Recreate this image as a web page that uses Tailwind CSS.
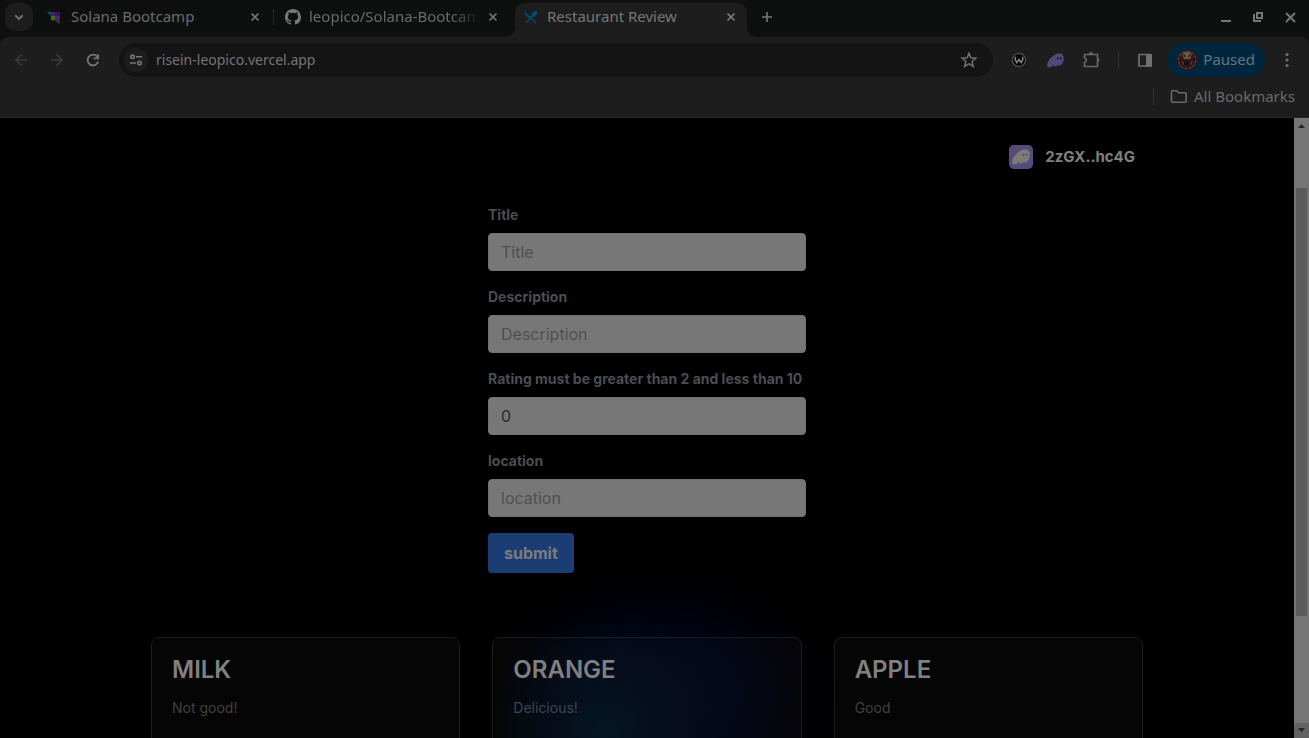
<!DOCTYPE html>
<html lang="en">
<head>
<meta charset="utf-8">
<meta name="viewport" content="width=device-width, initial-scale=1">
<title>Restaurant Review</title>
<script src="https://cdn.jsdelivr.net/npm/@tailwindcss/browser@4"></script>
</head>
<body class="flex h-screen flex-col overflow-hidden bg-black font-['Inter',sans-serif]">

<header class="shrink-0 bg-[#0e100f] font-['Noto_Sans',sans-serif] text-[15px] text-[#6a6a6a]">
  <!-- Tab strip -->
  <div class="flex h-[37px] items-stretch">
    <button aria-label="Search tabs" class="mt-[3px] ml-[5px] flex size-7 items-center justify-center rounded-[10px] bg-[#1d1d1d]">
      <svg class="size-4" viewBox="0 0 16 16" fill="none" stroke="#777" stroke-width="1.800"><path d="M4.300 6.300 8 10l3.700-3.700"/></svg>
    </button>

    <div class="flex w-[241px] items-center pb-1 pl-[14px]">
      <svg class="size-4 shrink-0" viewBox="0 0 16 16"><path d="M0 3h12.500v12.500L0 3z" fill="#0e5750"/><path d="M4 3h8.500v8.500H4z" fill="#491966"/><path d="M8 3h4.500v4H8z" fill="#32146b"/><path d="M8 7h4.500v4.500H8z" fill="#5f1b70"/><path d="M4 7h4v4H4z" fill="#397219"/><circle cx="14.500" cy="1.500" r="1" fill="#000"/></svg>
      <a href="#" class="ml-2 min-w-0 grow overflow-hidden whitespace-nowrap">Solana Bootcamp</a>
      <button aria-label="Close tab" class="mr-[10px] flex size-4 items-center justify-center"><svg class="size-4" viewBox="0 0 16 16" stroke="#777" stroke-width="1.600"><path d="m4.500 4.500 7 7m0-7-7 7"/></svg></button>
      <span class="h-4 w-px bg-[#242625]"></span>
    </div>

    <div class="flex w-[240px] items-center pb-1 pl-[11px]">
      <svg class="size-4 shrink-0" viewBox="0 0 16 16" fill="#777"><path d="M8 0C3.580 0 0 3.580 0 8c0 3.540 2.290 6.530 5.470 7.590.4.070.55-.17.55-.38 0-.19-.01-.82-.01-1.490-2.010.37-2.530-.49-2.690-.94-.09-.23-.48-.94-.82-1.130-.28-.15-.68-.52-.01-.53.63-.01 1.080.58 1.230.82.72 1.210 1.870.87 2.330.66.07-.52.28-.87.51-1.070-1.780-.2-3.640-.89-3.640-3.950 0-.87.31-1.590.82-2.150-.08-.2-.36-1.020.08-2.120 0 0 .67-.21 2.200.82a7.600 7.600 0 0 1 4 0c1.530-1.040 2.200-.82 2.200-.82.44 1.100.16 1.920.08 2.120.51.56.82 1.270.82 2.150 0 3.070-1.870 3.750-3.650 3.950.29.25.54.73.54 1.480 0 1.070-.01 1.930-.01 2.200 0 .21.15.46.55.38A8 8 0 0 0 16 8c0-4.420-3.580-8-8-8z"/></svg>
      <a href="#" class="ml-2 min-w-0 grow overflow-hidden whitespace-nowrap [mask-image:linear-gradient(to_right,black_84%,transparent)]">leopico/Solana-Bootcamp</a>
      <button aria-label="Close tab" class="mr-[13px] ml-[6px] flex size-4 shrink-0 items-center justify-center"><svg class="size-4" viewBox="0 0 16 16" stroke="#777" stroke-width="1.600"><path d="m4.500 4.500 7 7m0-7-7 7"/></svg></button>
    </div>

    <div class="relative mt-[3px] ml-px flex w-[232px] items-center rounded-t-[10px] bg-[#1d1d1d] pb-[7px] pl-2">
      <span class="absolute bottom-0 -left-[10px] size-[10px] bg-[radial-gradient(circle_at_0_0,transparent_10px,#1d1d1d_10px)]"></span>
      <span class="absolute -right-[10px] bottom-0 size-[10px] bg-[radial-gradient(circle_at_100%_0,transparent_10px,#1d1d1d_10px)]"></span>
      <svg class="size-4 shrink-0" viewBox="0 0 16 16" fill="none" stroke="#004c73" stroke-width="1.500"><path d="m3 13.700 7-7M6.500 7.500l6.300 6.200"/><path d="M1.400 2.200 7 7.600 5.600 9 2.500 6C1.400 4.900 1.100 3.600 1.400 2.200z" fill="#004c73" stroke="none"/><path d="M9 7.700C7.800 5.500 9.500 2.900 11.800 2.200c1.700-.5 2.900.7 2.400 2.400C13.500 7 11.200 8.600 9 7.700z" fill="#004c73" stroke="none"/></svg>
      <a href="#" class="ml-2 min-w-0 grow overflow-hidden whitespace-nowrap text-[#777]">Restaurant Review</a>
      <button aria-label="Close tab" class="mr-2 flex size-4 items-center justify-center"><svg class="size-4" viewBox="0 0 16 16" stroke="#808080" stroke-width="1.600"><path d="m4.500 4.500 7 7m0-7-7 7"/></svg></button>
    </div>
    <button aria-label="New tab" class="ml-3 flex w-4 items-center pb-[3px]"><svg class="size-4" viewBox="0 0 16 16" stroke="#777" stroke-width="1.600"><path d="M8 3v10M3 8h10"/></svg></button>

    <div class="ml-auto flex items-center gap-4 pr-[11px] pb-1">
      <button aria-label="Minimize"><svg class="size-4" viewBox="0 0 16 16"><path d="M3 11h10v2H3z" fill="#777"/></svg></button>
      <button aria-label="Restore"><svg class="size-4" viewBox="0 0 16 16" fill="none" stroke="#777" stroke-width="2"><path d="M7 4h5v5H7zM4 5v7h7"/></svg></button>
      <button aria-label="Close window"><svg class="size-4" viewBox="0 0 16 16" stroke="#777" stroke-width="2"><path d="m4 4 9 9m0-9-9 9"/></svg></button>
    </div>
  </div>

  <!-- Toolbar and bookmarks bar -->
  <div class="rounded-t-[8px] border-b border-[#262626] bg-[#1d1d1d]">
    <div class="flex h-[46px] items-center">
      <button aria-label="Back" class="ml-[13px]"><svg class="size-4" viewBox="0 0 16 16" fill="none" stroke="#3b3b3b" stroke-width="1.700"><path d="M14 8H3m5.500-5.500L3 8l5.500 5.500"/></svg></button>
      <button aria-label="Forward" class="ml-5"><svg class="size-4" viewBox="0 0 16 16" fill="none" stroke="#3b3b3b" stroke-width="1.700"><path d="M2 8h11M7.500 2.500 13 8l-5.500 5.500"/></svg></button>
      <button aria-label="Reload" class="ml-5"><svg class="size-4" viewBox="0 0 16 16"><path d="M13.200 9.500A5.400 5.400 0 1 1 12 4.400l1 1.100" fill="none" stroke="#777" stroke-width="1.700"/><path d="M14 2v5.200H8.800V5.600h3.600V2z" fill="#777"/></svg></button>
      <div class="ml-[18px] flex h-[34px] min-w-0 grow items-center rounded-full bg-[#141414] pl-[5px]">
        <button aria-label="Site information" class="flex size-6 shrink-0 items-center justify-center rounded-full bg-[#1d1d1d]"><svg class="size-4" viewBox="0 0 16 16" fill="none" stroke="#777" stroke-width="1.600"><circle cx="4.500" cy="4.800" r="1.700"/><path d="M8 4.800h6M2 11h6"/><circle cx="11.500" cy="11" r="1.700"/></svg></button>
        <input aria-label="Address" value="risein-leopico.vercel.app" class="ml-2 min-w-0 grow bg-transparent pb-[2px] text-[14px] text-[#747474] outline-none">
        <button aria-label="Bookmark this tab" class="mr-[15px]"><svg class="size-[18px]" viewBox="0 0 18 18" fill="none" stroke="#707070" stroke-width="1.500"><path d="m9 2.200 1.900 4.600 5 .4-3.800 3.300 1.200 4.900L9 12.800l-4.300 2.600 1.200-4.900-3.800-3.300 5-.4z"/></svg></button>
      </div>
      <button aria-label="Wallet extension" class="ml-[18px]"><svg class="size-4" viewBox="0 0 16 16" fill="none"><circle cx="8" cy="8" r="6.600" fill="#050505" stroke="#555" stroke-width="1.200"/><path d="M4.300 4.800v3l1.500 2.700L8 7.500l2.200 3 1.500-2.700v-3" stroke="#858585" stroke-width="1.500"/></svg></button>
      <button aria-label="Phantom extension" class="ml-5"><svg class="h-[15px] w-[17px]" viewBox="180 240 840 720"><path fill="#514a78" fill-rule="evenodd" d="M517 780C470 852 391 943 286 943C236 943 189 923 189 834C189 608 497 258 784 258C947 258 1012 371 1012 499C1012 664 905 853 799 853C765 853 748 834 748 805C748 797 750 789 752 780C716 842 646 899 580 899C532 899 508 869 508 827C508 812 511 796 517 780ZM904 495C904 532 882 551 858 551C833 551 811 532 811 495C811 457 833 439 858 439C882 439 904 457 904 495ZM764 495C764 532 742 551 717 551C692 551 670 532 670 495C670 457 692 439 717 439C742 439 764 457 764 495Z"/></svg></button>
      <button aria-label="Extensions" class="ml-[19px]"><svg class="h-[18px] w-[17px]" viewBox="0 0 17 18" fill="none"><path d="M1.500 3.500h13V8l1.200 1-1.200 1.200v5.300h-13v-4c2.500-.6 2.500-3.900 0-4.500z" stroke="#686868" stroke-width="1.700" stroke-linejoin="round"/><path d="M6 3a2 2 0 0 1 4 0zM14.500 7.500a1.900 1.900 0 0 1 0 3.700z" fill="#686868"/></svg></button>
      <span class="ml-[18px] h-4 w-px bg-[#333]"></span>
      <button aria-label="Side panel" class="ml-[18px]"><svg class="size-4" viewBox="0 0 16 16"><path d="M2 2.500h12v11.500H2z" fill="none" stroke="#707070" stroke-width="1.700" stroke-linejoin="round"/><path d="M9 2h6v12.500H9z" fill="#707070"/></svg></button>
      <button class="ml-[14px] flex h-[34px] items-center rounded-full bg-[#00263d] pr-[10px] pb-px pl-[10px] text-[#5e7785]">
        <svg class="mr-[6px] size-5" viewBox="0 0 20 20"><circle cx="10" cy="10" r="10" fill="#35191a"/><circle cx="10" cy="10" r="8.700" fill="none" stroke="#6b3327" stroke-width="1.200" stroke-dasharray="3 1.500"/><path d="M5 4c2-3 8-3 10 0l-2 5H7z" fill="#66564e"/><path d="M5.500 4l3 2m6-2-3 2M7.500 6.500h1m3 0h1M3 9l4 2.500h6L17 9l-2 6-3 1-2-2-2 2-3-1z" stroke="#1b0f10" fill="#5a3026"/><path d="M7 11.500h6v3.500H7z" fill="#1a1011"/></svg>
        Paused
      </button>
      <button aria-label="Browser menu" class="mr-[14px] ml-[14px]"><svg class="size-4" viewBox="0 0 16 16" fill="#707070"><circle cx="8" cy="2.500" r="1.600"/><circle cx="8" cy="8" r="1.600"/><circle cx="8" cy="13.500" r="1.600"/></svg></button>
    </div>
    <div class="flex h-[34px] items-start justify-end pt-[3px] pr-[14px]">
      <span class="mt-[3px] h-4 w-px bg-[#343434]"></span>
      <button class="ml-4 flex h-5 items-center gap-[6px]"><svg class="h-4 w-[18px]" viewBox="0 0 18 16" fill="none" stroke="#6a6a6a" stroke-width="1.600" stroke-linejoin="round"><path d="M1.500 3.700q0-1 1-1h4l2 2h6.700q1 0 1 1v7.500q0 1-1 1H2.500q-1 0-1-1z"/></svg>All Bookmarks</button>
    </div>
  </div>
</header>

<div class="flex min-h-0 grow">
  <main class="relative isolate min-w-0 grow overflow-hidden px-4 pt-[27px]">
    <!-- Glow behind the cards -->
    <div class="absolute top-[442px] left-1/2 -z-10 h-[270px] w-[360px] -translate-x-[167px] bg-[radial-gradient(closest-side,#00051a,#000415_40%,#000107_75%,transparent)]"></div>
    <div class="absolute top-[492px] left-1/2 -z-10 h-[240px] w-[240px] -translate-x-[162px] bg-[radial-gradient(closest-side,#00121e,#000c1a99_50%,transparent)]"></div>

    <div class="mx-auto max-w-[992px]">
      <div class="flex justify-end pr-2">
        <button class="flex h-6 items-center gap-3 text-[15px] font-bold text-[#808080]">
          <svg class="size-6" viewBox="46 46 1108 1108"><rect x="46" y="46" width="1108" height="1108" rx="220" fill="#554c7a"/><path fill="#7c7b76" fill-rule="evenodd" d="M517 780C470 852 391 943 286 943C236 943 189 923 189 834C189 608 497 258 784 258C947 258 1012 371 1012 499C1012 664 905 853 799 853C765 853 748 834 748 805C748 797 750 789 752 780C716 842 646 899 580 899C532 899 508 869 508 827C508 812 511 796 517 780ZM904 495C904 532 882 551 858 551C833 551 811 532 811 495C811 457 833 439 858 439C882 439 904 457 904 495ZM764 495C764 532 742 551 717 551C692 551 670 532 670 495C670 457 692 439 717 439C742 439 764 457 764 495Z"/></svg>
          2zGX..hc4G
        </button>
      </div>

      <form class="mx-auto mt-9 w-fit min-w-[318px] text-sm font-bold text-[#4a4d52]">
        <label for="title" class="mb-2 block">Title</label>
        <input id="title" placeholder="Title" class="mb-4 block h-[38px] w-full rounded border border-[#717274] bg-[#777] px-3 text-base font-normal text-[#25282e] placeholder:text-[#4d5055]">
        <label for="description" class="mb-2 block">Description</label>
        <input id="description" placeholder="Description" class="mb-4 block h-[38px] w-full rounded border border-[#717274] bg-[#777] px-3 text-base font-normal text-[#25282e] placeholder:text-[#4d5055]">
        <label for="rating" class="mb-2 block whitespace-nowrap">Rating must be greater than 2 and less than 10</label>
        <input id="rating" inputmode="numeric" value="0" class="mb-4 block h-[38px] w-full rounded border border-[#717274] bg-[#777] px-3 text-base font-normal text-[#25282e]">
        <label for="location" class="mb-2 block">location</label>
        <input id="location" placeholder="location" class="mb-4 block h-[38px] w-full rounded border border-[#717274] bg-[#777] px-3 text-base font-normal text-[#25282e] placeholder:text-[#4d5055]">
        <button type="submit" class="block rounded bg-[#1c3d74] px-4 py-2 text-base font-bold text-[#7b7c7d]">submit</button>
      </form>

      <div class="mt-16 grid grid-cols-3 gap-8 text-[#808080]">
        <article class="h-[160px] rounded-lg border border-[#1b1c1c] bg-white/2 px-5 py-4">
          <h2 class="mb-3 text-2xl font-semibold">MILK</h2>
          <p class="text-sm text-[#414141]">Not good!</p>
        </article>
        <article class="h-[160px] rounded-lg border border-[#1b1c1c] bg-white/2 px-5 py-4">
          <h2 class="mb-3 text-2xl font-semibold">ORANGE</h2>
          <p class="text-sm text-[#3f454a]">Delicious!</p>
        </article>
        <article class="h-[160px] rounded-lg border border-[#1b1c1c] bg-white/2 px-5 py-4">
          <h2 class="mb-3 text-2xl font-semibold">APPLE</h2>
          <p class="text-sm text-[#414141]">Good</p>
        </article>
      </div>
    </div>
  </main>

  <!-- Scrollbar -->
  <div aria-hidden="true" class="flex w-[15px] shrink-0 flex-col items-center bg-[#757575]">
    <svg class="size-[15px]" viewBox="0 0 15 15"><path d="M4 10h7L7.500 6z" fill="#262626"/></svg>
    <div class="flex-[55]"></div>
    <div class="w-[11px] flex-[428] bg-[#5b5b5b]"></div>
    <div class="flex-[107]"></div>
    <svg class="size-[15px] bg-[#626262]" viewBox="0 0 15 15"><path d="M4 5h7L7.500 9z" fill="#262626"/></svg>
  </div>
</div>
</body>
</html>
